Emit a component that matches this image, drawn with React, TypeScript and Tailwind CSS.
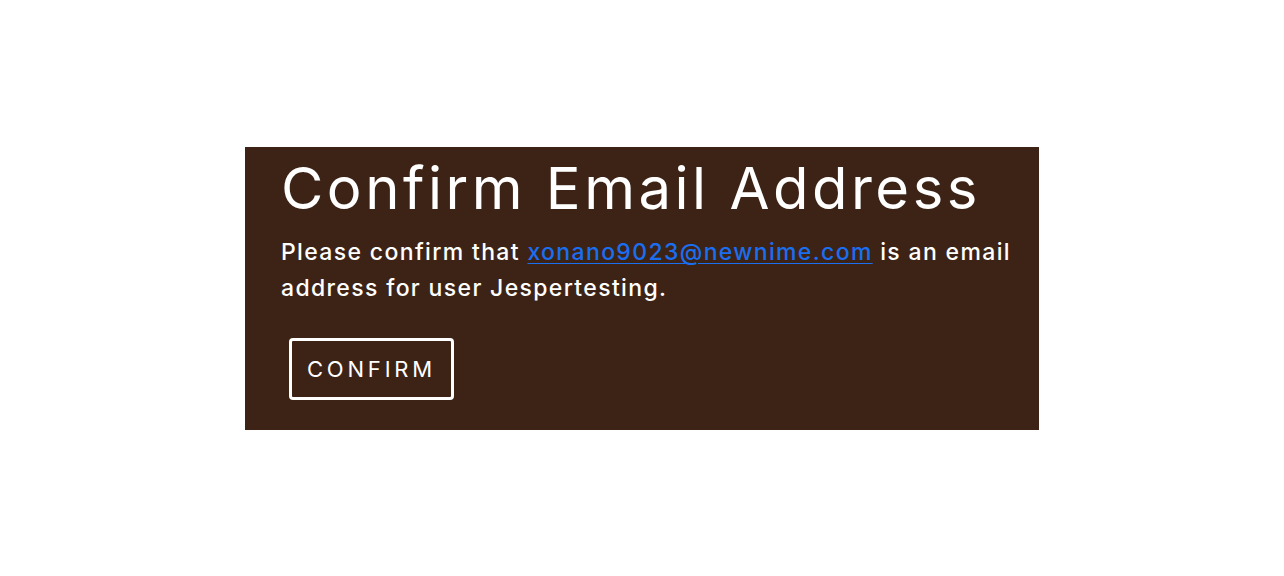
export default function App() {
  return (
    <div className="min-h-[576px] w-full bg-white pt-[147px]" style={{ fontFamily: "Inter, 'Noto Sans', sans-serif" }}>
      <div className="ml-[245px] w-[794px] bg-[#3d2316] pl-[36px] pr-4 pt-[6px] pb-[30px] text-white">
        <h1 className="text-[58px] font-normal leading-[70px] tracking-[3.5px]">Confirm Email Address</h1>
        <p className="mt-[11px] text-[23px] font-medium leading-[36px] tracking-[1.35px]">
          Please confirm that{" "}
          <a href="#" className="text-[#1a6ef0] underline underline-offset-[3px] decoration-1">
            xonano9023@newnime.com
          </a>{" "}
          is an email address for user Jespertesting.
        </p>
        <button className="ml-[8px] mt-[32px] flex h-[62px] w-[165px] items-center justify-center rounded-[4px] border-[3px] border-white text-[22px] font-normal tracking-[3.8px]">
          CONFIRM
        </button>
      </div>
    </div>
  );
}
